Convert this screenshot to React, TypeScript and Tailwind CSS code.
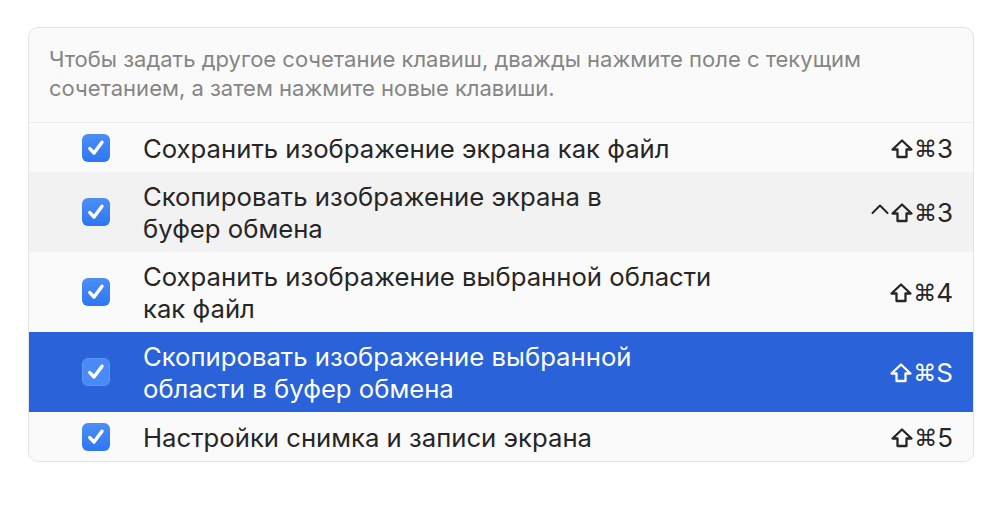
import { Fragment } from 'react'

type Row = {
  lines: string[]
  ctrl?: boolean
  key: string
  shade?: boolean
  selected?: boolean
}

const rows: Row[] = [
  { lines: ['Сохранить изображение экрана как файл'], key: '3' },
  { lines: ['Скопировать изображение экрана в', 'буфер обмена'], key: '3', ctrl: true, shade: true },
  { lines: ['Сохранить изображение выбранной области', 'как файл'], key: '4' },
  { lines: ['Скопировать изображение выбранной', 'области в буфер обмена'], key: 'S', selected: true },
  { lines: ['Настройки снимка и записи экрана'], key: '5' },
]

function Check({ selected }: { selected?: boolean }) {
  return (
    <div
      className={
        'w-[28px] h-[28px] rounded-[6px] flex items-center justify-center shrink-0 ' +
        (selected ? 'bg-[#4a8af6] border border-[#5d97f7]' : 'bg-gradient-to-b from-[#4b8ff8] to-[#2f75f1]')
      }
    >
      <svg width="22" height="22" viewBox="0 0 22 22" fill="none">
        <path d="M4.8 11.6 L9 16 L17 5.2" stroke="white" strokeWidth="3.4" strokeLinecap="round" strokeLinejoin="round" />
      </svg>
    </div>
  )
}

function Shift() {
  return (
    <svg width="24" height="22" viewBox="0 0 24 22" fill="none" className="inline-block">
      <path d="M12 2.5 L21.5 11.5 L16.5 11.5 L16.5 19 L7.5 19 L7.5 11.5 L2.5 11.5 Z" stroke="currentColor" strokeWidth="2.3" strokeLinejoin="round" />
    </svg>
  )
}

function Ctrl() {
  return (
    <svg width="20" height="22" viewBox="0 0 20 22" fill="none" className="inline-block">
      <path d="M2.5 11 L10 3.5 L17.5 11" stroke="currentColor" strokeWidth="2" strokeLinecap="round" strokeLinejoin="round" />
    </svg>
  )
}

export default function App() {
  return (
    <div className="w-[1006px] h-[518px] bg-white pt-[27px] pl-[28px]" style={{ fontFamily: 'Inter, "Noto Sans", "DejaVu Sans", sans-serif' }}>
      <div className="w-[946px] rounded-[10px] border border-[#e3e3e3] bg-[#fafafa] overflow-hidden">
        <div className="px-[20px] pt-[17px] pb-[19px] text-[22px] leading-[29px] text-[#858585] border-b border-[#ececec]">
          Чтобы задать другое сочетание клавиш, дважды нажмите поле с текущим
          <br />
          сочетанием, а затем нажмите новые клавиши.
        </div>
        {rows.map((r, i) => (
          <div
            key={i}
            className={
              'flex items-center pl-[53px] pr-[20px] ' +
              (r.lines.length > 1 ? 'h-[80px] ' : 'h-[49px] ') +
              (r.selected ? 'bg-[#2962d9] text-white' : r.shade ? 'bg-[#f2f2f2] text-[#262626]' : 'bg-[#fafafa] text-[#262626]')
            }
          >
            <Check selected={r.selected} />
            <div className="ml-[33px] flex-1 pt-[2px] text-[25.7px] leading-[32px]">
              {r.lines.map((l, j) => (
                <Fragment key={j}>
                  {j > 0 && <br />}
                  {l}
                </Fragment>
              ))}
            </div>
            <div className="flex items-center pt-[2px] text-[26px] leading-[32px]">
              {r.ctrl && <Ctrl />}
              <Shift />
              <span className="text-[23px]" style={{ fontFamily: '"DejaVu Sans", sans-serif' }}>⌘</span>
              <span>{r.key}</span>
            </div>
          </div>
        ))}
      </div>
    </div>
  )
}
